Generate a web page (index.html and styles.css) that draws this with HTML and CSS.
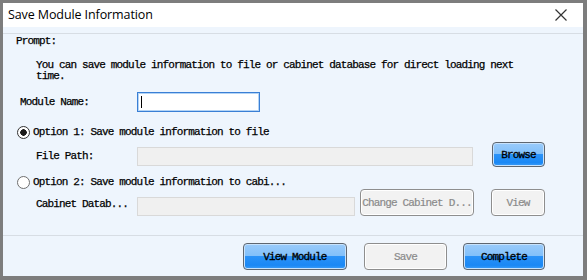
FILE: index.html
```html
<!DOCTYPE html>
<html lang="en">
<head>
    <meta charset="UTF-8">
    <title>Save Module Information</title>
    <link rel="stylesheet" href="styles.css">
</head>
<body>
    <div class="window">
        <div class="titlebar">
            <span class="title">Save Module Information</span>
            <svg class="close" width="12" height="12" viewBox="0 0 12 12">
                <path d="M0.5 0.5 L11.5 11.5 M11.5 0.5 L0.5 11.5" stroke="#333" stroke-width="1.2" fill="none"/>
            </svg>
        </div>

        <div class="content">
            <div class="group">
                <div class="prompt">Prompt:</div>
                <p class="note">You can save module information to file or cabinet database for direct loading next time.</p>

                <div class="row name-row">
                    <span class="label">Module Name:</span>
                    <div class="textbox active"><span class="caret"></span></div>
                </div>

                <!-- Option 1: file -->
                <div class="row option">
                    <span class="radio checked"></span>
                    <span>Option 1: Save module information to file</span>
                </div>
                <div class="row field file-row">
                    <span class="label sub">File Path:</span>
                    <div class="textbox disabled path"></div>
                    <button class="btn browse">Browse</button>
                </div>

                <!-- Option 2: cabinet database -->
                <div class="row option second">
                    <span class="radio"></span>
                    <span>Option 2: Save module information to cabi...</span>
                </div>
                <div class="row field cab-row">
                    <span class="label sub">Cabinet Datab...</span>
                    <div class="textbox disabled cab"></div>
                    <button class="btn off change">Change Cabinet D...</button>
                    <button class="btn off view">View</button>
                </div>
            </div>

            <div class="actions">
                <button class="btn view-module">View Module</button>
                <button class="btn off save">Save</button>
                <button class="btn complete">Complete</button>
            </div>
        </div>
    </div>
</body>
</html>
```

FILE: styles.css
```css
body {
    margin: 0;
    background: #7f7f7f;
}

.window {
    box-sizing: border-box;
    height: 280px;
    border: solid #7d7d7d;
    border-width: 3px 4px 4px 3px;
    font-family: "Liberation Mono", monospace;
    font-size: 11px;
    letter-spacing: -0.85px;
    -webkit-text-stroke: 0.25px #000;
    color: #000;
}

.titlebar {
    height: 24px;
    background: #fff;
    display: flex;
    align-items: center;
    padding: 0 16px 0 5px;
}

.title {
    flex: 1;
    font-family: "Open Sans", "Liberation Sans", sans-serif;
    font-size: 12.5px;
    letter-spacing: -0.1px;
    -webkit-text-stroke: 0;
    padding-bottom: 1px;
}

.content {
    height: 249px;
    background: #eef5fd;
    padding-top: 6px;
    box-sizing: border-box;
}

.group {
    height: 202px;
    box-sizing: border-box;
    border-top: 1px solid #d7dde4;
}

.prompt {
    margin: 1px 0 0 13px;
    line-height: 12px;
}

.note {
    width: 490px;
    margin: 13px 0 0 33px;
    line-height: 11px;
}

.row {
    display: flex;
    align-items: center;
}

.label {
    line-height: 12px;
}

.name-row {
    margin-top: 10px;
    padding-left: 17px;
    height: 20px;
}

.name-row .label {
    width: 117px;
}

.textbox {
    box-sizing: border-box;
    height: 19px;
}

.textbox.active {
    width: 123px;
    height: 20px;
    background: #fff;
    border: 1px solid #3a7fd5;
    box-shadow: inset 0 0 0 1px #b4d4f5;
    display: flex;
    align-items: center;
    padding-left: 3px;
}

.caret {
    width: 1px;
    height: 12px;
    background: #000;
}

.textbox.disabled {
    background: #f0f0f0;
    border: 1px solid #d9d9d9;
}

.option {
    height: 14px;
    margin-top: 13px;
    padding-left: 14px;
}

.option.second {
    margin-top: 8px;
}

.radio {
    box-sizing: border-box;
    width: 13px;
    height: 13px;
    margin-right: 3px;
    border: 1px solid #6f6f6f;
    border-radius: 50%;
    background: #fff;
}

.radio.checked {
    background: radial-gradient(circle, #1a1a1a 0 3px, #fff 3.5px);
    border-color: #333;
}

.field {
    align-items: flex-start;
    padding-left: 33px;
}

.file-row {
    margin-top: 3px;
}

.field .label {
    width: 101px;
}

.file-row .label {
    margin-top: 8px;
}

.file-row .textbox {
    margin-top: 5px;
}

.cab-row .label {
    margin-top: 9px;
}

.cab-row .textbox {
    margin-top: 8px;
}

.path {
    width: 336px;
}

.cab {
    width: 218px;
}

.btn {
    box-sizing: border-box;
    height: 27px;
    padding: 0;
    font-family: "Liberation Mono", monospace;
    font-size: 11px;
    letter-spacing: -0.85px;
    -webkit-text-stroke: 0.3px #000;
    color: #000;
    border: 1px solid #5e6670;
    border-radius: 4px;
    background: linear-gradient(#9acbfb 0%, #82c0fa 46%, #2a92f8 50%, #1a88f5 85%, #3d9df7 100%);
    box-shadow: inset 0 0 0 1px #c7e2fc;
}

.btn.off {
    color: #8a8a8a;
    -webkit-text-stroke: 0.2px #8a8a8a;
    border-color: #8e8e8e;
    background: #f2f2f2;
    box-shadow: inset 0 0 0 1px #fff;
}

.browse {
    width: 53px;
    height: 25px;
    margin-left: 19px;
}

.change {
    width: 114px;
    margin-left: 5px;
}

.view {
    width: 54px;
    margin-left: 17px;
}

.actions {
    display: flex;
    border-top: 1px solid #d7dde4;
    padding: 7px 0 0 240px;
}

.view-module {
    width: 104px;
}

.save {
    width: 83px;
    margin-left: 17px;
}

.complete {
    width: 82px;
    margin-left: 16px;
}
```
